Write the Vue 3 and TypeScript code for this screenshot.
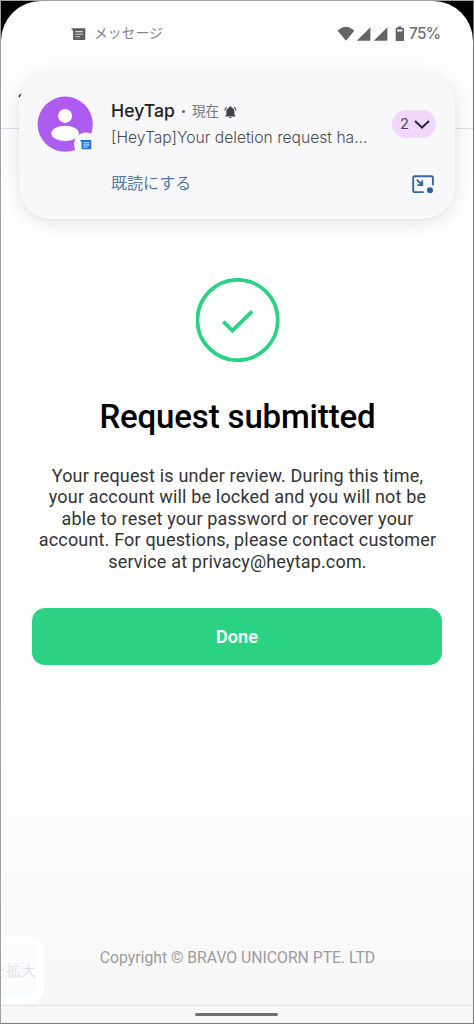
<script setup lang="ts">
const messageLines: string[] = [
  'Your request is under review. During this time,',
  'your account will be locked and you will not be',
  'able to reset your password or recover your',
  'account. For questions, please contact customer',
  'service at privacy@heytap.com.',
]
const battery = 75
const unread = 2
</script>

<template>
  <div class="device">
    <div class="screen">
      <header class="status">
        <svg class="msg-icon" viewBox="0 0 15 13" width="15" height="13">
          <path d="M0 .3H13.6Q14.3 .3 14.3 1V11.2Q14.3 12 13.5 12H3Q2.1 12 2.1 11.1V3Z" fill="#5e5e61" />
          <path d="M4.3 3.6H12M4.3 6.2H12M4.3 8.7H9.2" stroke="#d4d4d6" stroke-width="1.1" />
        </svg>
        <span class="app-name">メッセージ</span>
        <span class="grow"></span>
        <svg class="signals" viewBox="0 0 68 16" width="68" height="16">
          <g fill="#646464">
            <path d="M.6 4.8Q8.9-3.4 17.3 4.8L9 14.8Z" />
            <path d="M19.8 14.8L33.4 1.2V14.8Z" />
            <path d="M36.8 14.8L50.4 1.2V14.8Z" />
            <path d="M60.6 .6H64.6V2H67V15H58.7V2H60.6Z" />
          </g>
          <path d="M60.2 3.4H65.4V5.4H60.2Z" fill="#f5f5f5" />
        </svg>
        <span class="pct">{{ battery }}%</span>
      </header>
      <nav class="toolbar">
        <svg viewBox="0 0 12 8" width="12" height="8"><path d="M2 5.8L5.5 2.4" stroke="#222" stroke-width="2" /></svg>
      </nav>

      <main class="content">
        <svg class="success" viewBox="0 0 84 84" width="84" height="84">
          <circle cx="41.6" cy="42" r="40.2" fill="none" stroke="#2cd283" stroke-width="3.7" />
          <path d="M27.3 43.6L36.4 52.5L56.1 33.4" fill="none" stroke="#2cd283" stroke-width="3.8" />
        </svg>
        <h1>Request submitted</h1>
        <p class="message">
          <span v-for="line in messageLines" :key="line">{{ line }}</span>
        </p>
        <button class="done" type="button">Done</button>
      </main>

      <footer class="copyright">Copyright © BRAVO UNICORN PTE. LTD</footer>
      <div class="gesture"><span class="handle"></span></div>

      <aside class="zoom-chip"><span>を拡大</span></aside>

      <section class="notification">
        <svg class="avatar" viewBox="0 0 58 58" width="58" height="58">
          <circle cx="28.2" cy="28.2" r="27.6" fill="#ae5bf2" />
          <circle cx="28.1" cy="19.9" r="7" fill="#fff" />
          <ellipse cx="28.1" cy="37.3" rx="13.8" ry="7.6" fill="#fff" />
          <circle cx="49" cy="48.5" r="12" fill="#f8f8fc" />
          <path d="M43 44H54.3V53.3H44.6V46.2Z" fill="#1a73e8" />
          <path d="M46.4 46.8H52.5M46.4 49H52.5M46.4 51.1H50.4" stroke="#f4f8ff" stroke-width="1" />
        </svg>
        <div class="body">
          <div class="heading">
            <strong>HeyTap</strong><i class="dot"></i><span class="time">現在</span>
            <svg class="bell" viewBox="0 0 14 14" width="14" height="14">
              <path d="M2.6 10V6.3Q2.6 3.1 5.6 2.3V1.2H8.2V2.3Q11.2 3.1 11.2 6.3V10L12.4 11.2V11.8H1.4V11.2ZM5.5 12.4H8.3Q8.1 13.6 6.9 13.6T5.5 12.4Z" fill="#3e4146" />
              <path d="M.9 5.6Q1.1 3.3 2.8 1.8M12.9 5.6Q12.7 3.3 11 1.8" fill="none" stroke="#3e4146" stroke-width="1.1" />
            </svg>
          </div>
          <div class="preview">[HeyTap]Your deletion request ha...</div>
          <a class="mark-read">既読にする</a>
        </div>
        <div class="actions">
          <span class="count">{{ unread }}
            <svg viewBox="0 0 16 9" width="16" height="9"><path d="M1 1L8 7.6L15 1" fill="none" stroke="#32263a" stroke-width="2" /></svg>
          </span>
          <svg class="bubble" viewBox="0 0 23 20" width="23" height="20">
            <path d="M11.8 17.1H2.7Q1.2 17.1 1.2 15.6V2.7Q1.2 1.2 2.7 1.2H19.4Q20.9 1.2 20.9 2.7V10.2" fill="none" stroke="#3566a0" stroke-width="1.9" />
            <path d="M4.8 4.8L10 9.8M10.2 5.2V10.1H5.3" fill="none" stroke="#3566a0" stroke-width="1.9" />
            <circle cx="18" cy="15.2" r="3" fill="#2860a4" />
          </svg>
        </div>
      </section>
    </div>
  </div>
</template>

<style>
body { margin: 0; background: #000; }
</style>

<style scoped>
* { box-sizing: border-box; }
.device { width: 474px; height: 1024px; background: #000; border: 1px solid #a0a0a0; border-right-color: #777; border-bottom-color: #808080; overflow: hidden; font-family: Roboto, "Noto Sans CJK JP", sans-serif; }
.screen { position: relative; height: 1022px; display: flex; flex-direction: column; border-radius: 40px 40px 0 0; overflow: hidden; background: linear-gradient(#fdfdff 0, #fdfdfe 127px, #fff 220px, #fff 700px, #f9f9f9 930px, #f7f7f7 100%); }
.status { height: 64px; flex: none; display: flex; align-items: center; padding: 0 34px 0 70px; color: #646464; }
.msg-icon { margin-top: 2px; }
.app-name { font: 13.8px/20px "Noto Sans CJK JP", sans-serif; margin: -2px 0 0 8px; color: #858588; }
.grow { flex: 1; }
.signals { flex: none; margin-top: 1px; }
.pct { font: 500 15.4px/20px Inter, sans-serif; margin: 2px 0 0 4px; width: 30px; letter-spacing: -.7px; color: #707070; white-space: nowrap; }
.toolbar { height: 64px; flex: none; border-bottom: 1px solid #dddde7; padding: 26px 0 0 16px; }
.toolbar svg { display: block; }
.content { flex: 1; display: flex; flex-direction: column; align-items: center; padding: 149px 0 0 1px; }
.success { flex: none; }
h1 { margin: 33px 0 0; font: 500 33px/44px Roboto, sans-serif; letter-spacing: -.15px; color: #000; white-space: nowrap; }
.message { margin: 26px 0 0; display: flex; flex-direction: column; align-items: center; font-size: 18px; line-height: 21.4px; color: #333; white-space: nowrap; letter-spacing: .17px; }
.done { margin: 36px 1px 0 0; width: 410px; height: 57px; border: 0; border-radius: 13px; background: #2cd283; color: #fff; font: 600 18px/24px Roboto, sans-serif; letter-spacing: .1px; }
.copyright { height: 57px; flex: none; text-align: center; font-size: 15.75px; line-height: 20px; padding-left: 1px; color: #9c9c9c; white-space: nowrap; }
.gesture { height: 18px; flex: none; border-top: 1px solid #e2e2e2; display: flex; justify-content: center; padding: 7px 2px 0 0; }
.handle { width: 83px; height: 3px; border-radius: 2px; background: #707070; }
.zoom-chip { position: absolute; left: -12px; top: 935px; width: 55px; height: 68px; border: 8px solid #fff; border-radius: 16px; background: #fafcfe; overflow: hidden; display: flex; justify-content: flex-end; align-items: center; color: #e2e3e6; font: 15px/20px "Noto Sans CJK JP", sans-serif; white-space: nowrap; }
.notification { position: absolute; left: 18px; top: 72px; width: 436px; height: 146px; border-radius: 32px; background: #f8f8fb; box-shadow: 0 4px 18px rgba(0,0,0,.11), 0 1px 3px rgba(0,0,0,.03); display: flex; padding: 0 18px; }
.avatar { flex: none; margin-top: 23px; }
.body { margin-left: 16px; flex: 1; padding-top: 26px; }
.heading { display: flex; align-items: center; height: 24px; color: #202124; }
.heading strong { font: 450 17.6px/24px Inter, sans-serif; margin-top: -1px; letter-spacing: .05px; }
.dot { width: 3px; height: 3px; border-radius: 50%; background: #65656a; margin: 1px 7px 0 7px; }
.time { font: 13.6px/24px "Noto Sans CJK JP", sans-serif; color: #77777b; margin-top: -2px; }
.bell { width: 13px; margin-left: 5px; margin-top: 1px; }
.preview { font: 300 15.65px/22px Inter, sans-serif; margin-top: 4px; color: #4b4c50; white-space: nowrap; }
.mark-read { display: block; margin-top: 21px; font: 16px/24px "Noto Sans CJK JP", sans-serif; color: #5577a0; }
.actions { flex: none; width: 44px; padding-top: 37px; display: flex; flex-direction: column; }
.count { width: 44px; height: 28px; margin-left: -1px; border-radius: 14px; background: #f2d7fc; display: flex; align-items: center; justify-content: center; gap: 5px; padding-left: 2px; font: 15px/20px Roboto, sans-serif; color: #51425a; }
.bubble { margin: 37px 0 0 19px; }
</style>
